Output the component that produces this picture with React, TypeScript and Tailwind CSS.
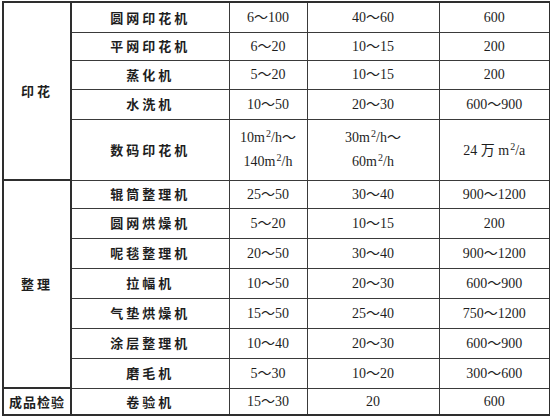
const zh = { fontFamily: '"Noto Sans CJK SC", "Noto Sans", sans-serif' };
const num = { fontFamily: '"Liberation Serif", "Noto Sans CJK SC", serif' };

type Row = { name: string; a: React.ReactNode; b: React.ReactNode; c: React.ReactNode; h: string };

const sq = <sup className="text-[10px] top-[-5px] ml-px">2</sup>;

const groups: { label: string; rows: Row[]; tracking: string }[] = [
    {
        label: '印花',
        tracking: 'tracking-[3px]',
        rows: [
            { name: '圆网印花机', a: '6～100', b: '40～60', c: '600', h: 'h-[30px]' },
            { name: '平网印花机', a: '6～20', b: '10～15', c: '200', h: 'h-[28px]' },
            { name: '蒸化机', a: '5～20', b: '10～15', c: '200', h: 'h-[29px]' },
            { name: '水洗机', a: '10～50', b: '20～30', c: '600～900', h: 'h-[30px]' },
            {
                name: '数码印花机',
                a: (
                    <div className="leading-[24px]">
                        <div>10m{sq}/h～</div>
                        <div>140m{sq}/h</div>
                    </div>
                ),
                b: (
                    <div className="leading-[24px]">
                        <div>30m{sq}/h～</div>
                        <div>60m{sq}/h</div>
                    </div>
                ),
                c: (
                    <span>
                        24 <span style={zh}>万</span> m{sq}/a
                    </span>
                ),
                h: 'h-[61px]',
            },
        ],
    },
    {
        label: '整理',
        tracking: 'tracking-[3px]',
        rows: [
            { name: '辊筒整理机', a: '25～50', b: '30～40', c: '900～1200', h: 'h-[28px]' },
            { name: '圆网烘燥机', a: '5～20', b: '10～15', c: '200', h: 'h-[30px]' },
            { name: '呢毯整理机', a: '20～50', b: '30～40', c: '900～1200', h: 'h-[30px]' },
            { name: '拉幅机', a: '10～50', b: '20～30', c: '600～900', h: 'h-[30px]' },
            { name: '气垫烘燥机', a: '15～50', b: '25～40', c: '750～1200', h: 'h-[30px]' },
            { name: '涂层整理机', a: '10～40', b: '20～30', c: '600～900', h: 'h-[30px]' },
            { name: '磨毛机', a: '5～30', b: '10～20', c: '300～600', h: 'h-[30px]' },
        ],
    },
    {
        label: '成品检验',
        tracking: 'tracking-[1px]',
        rows: [{ name: '卷验机', a: '15～30', b: '20', c: '600', h: 'h-[27px]' }],
    },
];

export default function App() {
    return (
        <div className="w-[550px] h-[419px] bg-white pt-px pl-[2px]">
            <table className="table-fixed border-collapse border-2 border-[#2e2e2e] text-[#1e1e1e] w-[547px]">
                <colgroup>
                    <col className="w-[68px]" />
                    <col className="w-[158px]" />
                    <col className="w-[78px]" />
                    <col className="w-[132px]" />
                    <col className="w-[111px]" />
                </colgroup>
                <tbody>
                    {groups.map((g) =>
                        g.rows.map((r, i) => (
                            <tr key={r.name} className={r.h}>
                                {i === 0 && (
                                    <td
                                        rowSpan={g.rows.length}
                                        style={zh}
                                        className={`border-2 border-[#2e2e2e] text-center align-middle text-[13px] font-bold ${g.tracking} p-0`}
                                    >
                                        {g.label}
                                    </td>
                                )}
                                <td
                                    style={zh}
                                    className="border border-[#3a3a3a] border-l-2 text-center text-[13px] font-bold tracking-[3px] p-0"
                                >
                                    {r.name}
                                </td>
                                <td style={num} className="border border-[#3a3a3a] text-center text-[14px] p-0 whitespace-nowrap">
                                    {r.a}
                                </td>
                                <td style={num} className="border border-[#3a3a3a] text-center text-[14px] p-0 whitespace-nowrap">
                                    {r.b}
                                </td>
                                <td style={num} className="border border-[#3a3a3a] text-center text-[14px] p-0 whitespace-nowrap">
                                    {r.c}
                                </td>
                            </tr>
                        ))
                    )}
                </tbody>
            </table>
        </div>
    );
}
